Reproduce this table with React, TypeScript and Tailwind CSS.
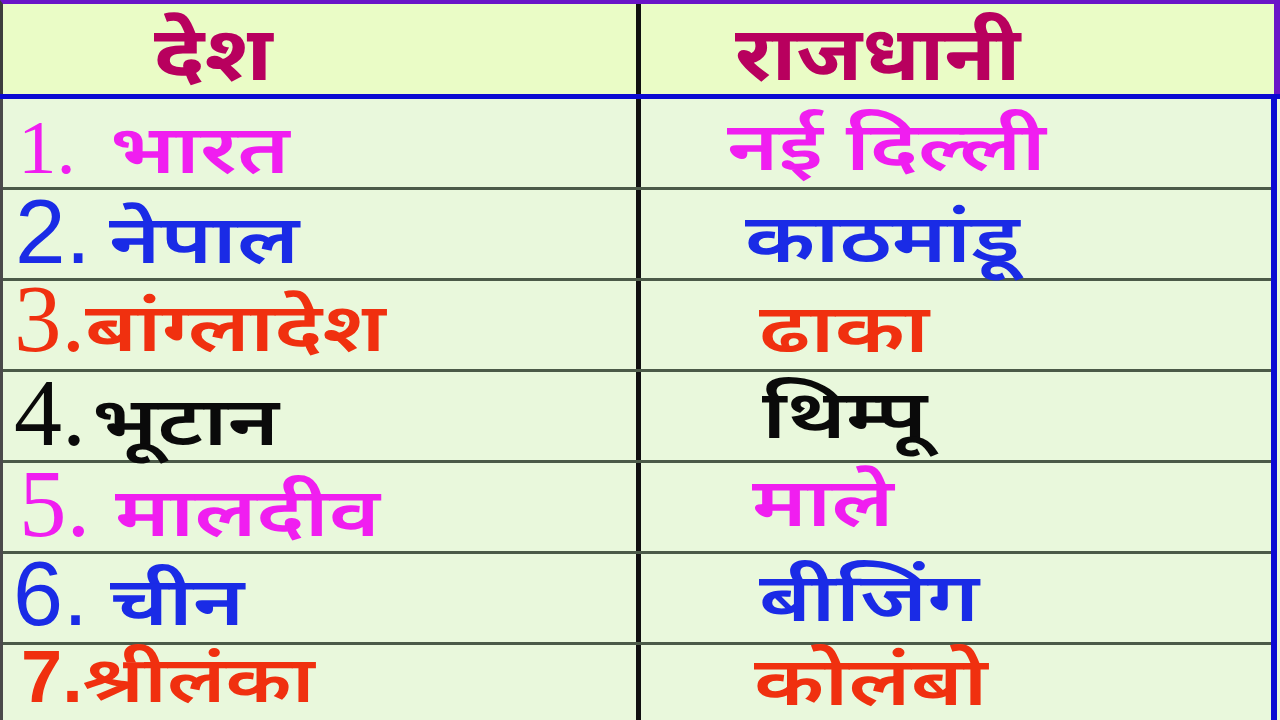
const rows = [
  { num: "1.", name: "भारत", capital: "नई दिल्ली", color: "text-[#f01ef0]", numCls: "text-[77px] font-['Liberation_Serif',serif]", numBox: "w-[92px]", nameCls: "text-[68px]", left: "pl-[15px]", leftMt: "mt-[10px]", right: "pl-[86px]", rightMt: "mt-[21px]" },
  { num: "2.", name: "नेपाल", capital: "काठमांडू", color: "text-[#1a2be6]", numCls: "text-[91px] font-['Liberation_Sans',sans-serif]", numBox: "w-[94px]", nameCls: "text-[68px]", left: "pl-[12px]", leftMt: "-mt-[4px]", right: "pl-[104px]", rightMt: "mt-[22px]" },
  { num: "3.", name: "बांग्लादेश", capital: "ढाका", color: "text-[#f0300f]", numCls: "text-[95px] font-['Liberation_Serif',serif]", numBox: "w-[71px]", nameCls: "text-[68px]", left: "pl-[11px]", leftMt: "-mt-[9px]", right: "pl-[118px]", rightMt: "mt-[21px]" },
  { num: "4.", name: "भूटान", capital: "थिम्पू", color: "text-[#0a0a0a]", numCls: "text-[96px] font-['Liberation_Serif',serif]", numBox: "w-[78px]", nameCls: "text-[68px]", left: "pl-[11px]", leftMt: "-mt-[7px]", right: "pl-[121px]", rightMt: "mt-[16px]" },
  { num: "5.", name: "मालदीव", capital: "माले", color: "text-[#f01ef0]", numCls: "text-[95px] font-['Liberation_Serif',serif]", numBox: "w-[96px]", nameCls: "text-[68px]", left: "pl-[16px]", leftMt: "-mt-[6px]", right: "pl-[111px]", rightMt: "mt-[13px]" },
  { num: "6.", name: "चीन", capital: "बीजिंग", color: "text-[#1a2be6]", numCls: "text-[90px] font-['Liberation_Sans',sans-serif]", numBox: "w-[97px]", nameCls: "text-[68px]", left: "pl-[10px]", leftMt: "-mt-[5px]", right: "pl-[118px]", rightMt: "mt-[17px]" },
  { num: "7.", name: "श्रीलंका", capital: "कोलंबो", color: "text-[#f0300f]", numCls: "text-[74px] font-bold font-['Liberation_Sans',sans-serif]", numBox: "w-[61px]", nameCls: "text-[64px]", left: "pl-[18px]", leftMt: "-mt-[5px]", right: "pl-[113px]", rightMt: "mt-[10px]" },
];

export default function App() {
  return (
    <div className="w-[1280px] h-[720px] overflow-hidden bg-[#e9f8dc] font-['Noto_Sans_Devanagari','Noto_Sans',sans-serif]">
      {/* header */}
      <div className="flex h-[94px] border-t-4 border-t-[#6a14c8] border-l-[3px] border-l-[#3d3d3d] border-r-[6px] border-r-[#6a14c8] bg-[#eafcc6]">
        <div className="flex w-[633px] items-start pl-[151px] pt-[20px]">
          <span className="inline-block origin-left scale-x-[1.18] text-[76px] font-bold leading-none text-[#b8005e]">देश</span>
        </div>
        <div className="w-[5px] bg-[#101010]" />
        <div className="flex flex-1 items-start pl-[94px] pt-[20px]">
          <span className="inline-block origin-left scale-x-[1.1] text-[76px] font-bold leading-none text-[#b8005e]">राजधानी</span>
        </div>
      </div>
      <div className="h-[5px] bg-[#0a0ad2]" />

      {/* body */}
      <div className="mr-[3px] border-l-[3px] border-l-[#4a4a4a] border-r-[6px] border-r-[#0a0ad2]">
        {rows.map((r, i) => (
          <div
            key={r.num}
            className={`flex h-[91px] ${i < rows.length - 1 ? "border-b-[3px] border-b-[#4b5a48]" : ""}`}
          >
            <div className={`flex w-[633px] items-start ${r.left} ${r.color}`}>
              <div className={`flex items-baseline leading-none whitespace-nowrap ${r.leftMt}`}>
                <span className={`inline-block ${r.numBox} ${r.numCls}`}>{r.num}</span>
                <span className={`inline-block origin-left scale-x-[1.28] font-semibold ${r.nameCls}`}>{r.name}</span>
              </div>
            </div>
            <div className="w-[5px] bg-[#101010]" />
            <div className={`flex flex-1 items-start ${r.right} ${r.color}`}>
              <span className={`inline-block origin-left scale-x-[1.28] whitespace-nowrap text-[68px] font-semibold leading-none ${r.rightMt}`}>
                {r.capital}
              </span>
            </div>
          </div>
        ))}
      </div>
    </div>
  );
}
